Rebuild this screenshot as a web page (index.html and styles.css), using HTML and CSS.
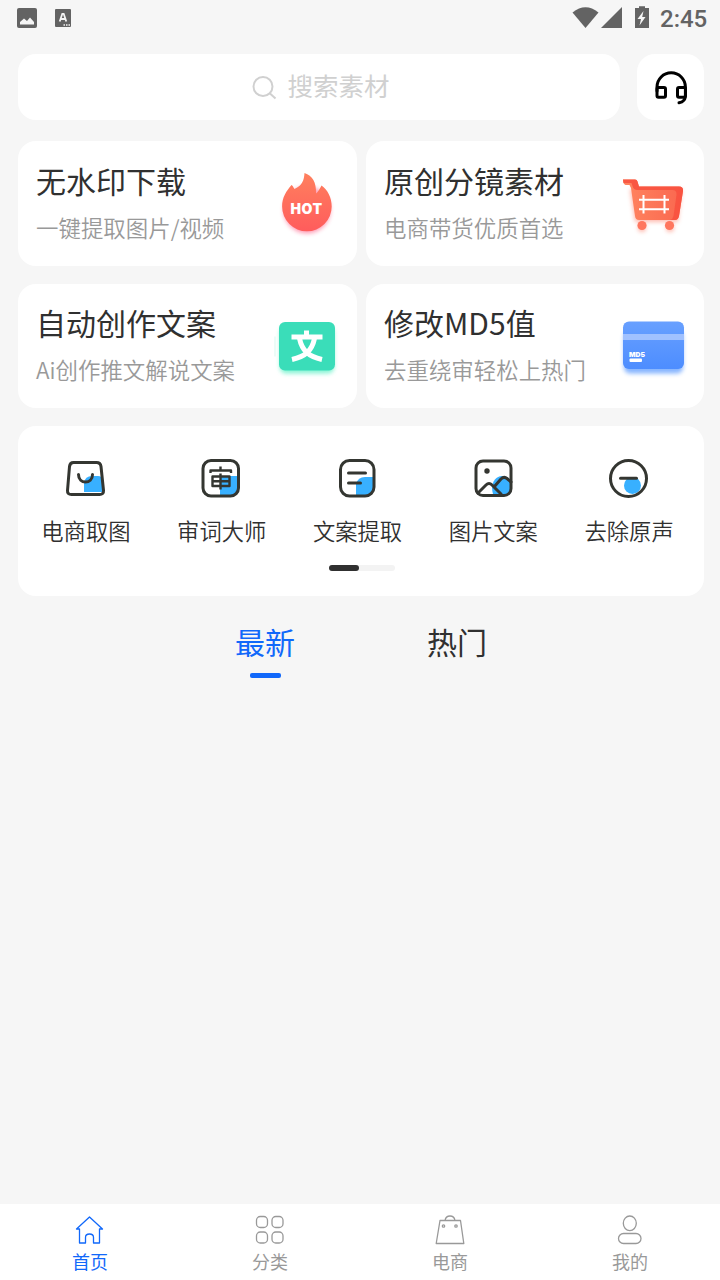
FILE: index.html
```html
<!DOCTYPE html>
<html lang="zh-CN">
<head>
<meta charset="utf-8">
<title>首页</title>
<link rel="stylesheet" href="styles.css">
</head>
<body>
<div class="app">
  <header class="status">
    <svg class="status-left" viewBox="0 0 90 36">
      <rect x="17" y="8" width="20" height="20" rx="2" fill="#636363"/>
      <path d="M20 24.5V22l4-3.500 3 2.500 3-3.500 4 4.500v2.500z" fill="#f5f5f5"/>
      <rect x="55" y="9" width="16" height="18" rx="1" fill="#636363"/>
      <path d="M59.700 21.500 62.300 13.800h1.400l2.600 7.700M60.800 19h4.400" fill="none" stroke="#f5f5f5" stroke-width="1.800"/>
      <path d="M63.500 25h6.500" stroke="#f5f5f5" stroke-width="1.500" stroke-dasharray="1.500 1"/>
    </svg>
    <div class="status-right">
      <svg class="signals" viewBox="572 0 80 36">
        <path d="M572.500 12.500Q585.500 2 598.500 12.500L585.500 28z" fill="#636363"/>
        <path d="M622 7v21h-21z" fill="#636363"/>
        <path d="M639 6.200h6V8h4v20h-14V8h4z" fill="#636363"/>
        <path d="M643.500 11 637.500 19h3.500l-1.500 6.500 6-8.500h-3.300z" fill="#f5f5f5"/>
      </svg>
      <span class="clock">2:45</span>
    </div>
  </header>

  <div class="search-row">
    <div class="search">
      <svg class="search-icon" viewBox="252 74 26 26" fill="none" stroke="#d0d0d0" stroke-width="2">
        <circle cx="264" cy="86.500" r="9.500"/><path d="m271 93.500 5.500 5"/>
      </svg>
      <span>搜索素材</span>
    </div>
    <button class="service" aria-label="客服">
      <svg viewBox="637 54 67 66" fill="none" stroke="#000" stroke-width="3">
        <path d="M657 91v-4a14.200 14.200 0 0 1 28.400 0v8c0 4-2 7.200-6.400 7.800" stroke-linecap="round"/>
        <rect x="657" y="87.500" width="8.500" height="9.800" rx="1.500"/>
        <rect x="677.500" y="87.500" width="8" height="9.800" rx="1.500"/>
      </svg>
    </button>
  </div>

  <main>
    <section class="cards">
      <article class="card">
        <div class="card-text"><h2>无水印下载</h2><p>一键提取图片/视频</p></div>
        <svg class="card-icon" viewBox="265 160 90 90">
          <defs>
            <linearGradient id="flame" x2="0" y2="1"><stop stop-color="#ff805e"/><stop offset="1" stop-color="#ff5c5c"/></linearGradient>
            <filter id="blur" x="-30%" y="-30%" width="160%" height="160%"><feGaussianBlur stdDeviation="2"/></filter>
          </defs>
          <circle cx="307" cy="210" r="23.500" fill="#ff668c" opacity=".65" filter="url(#blur)"/>
          <path d="M304.500 173c8 2.500 12 9.500 11.500 20.500 2.500-2 3.500-4.500 5.500-8 6 4 10.200 12 10.200 21a24.800 24.800 0 0 1-49.600 0c0-9 4.200-15.500 9.400-21.500 1.500 1 2 2.500 3 4 8-3.500 9.500-9 10-16z" fill="url(#flame)"/>
          <text x="306.500" y="214" class="hot">HOT</text>
        </svg>
      </article>
      <article class="card">
        <div class="card-text"><h2>原创分镜素材</h2><p>电商带货优质首选</p></div>
        <svg class="card-icon wide" viewBox="610 160 94 90">
          <defs>
            <linearGradient id="cart"><stop stop-color="#ff8560"/><stop offset="1" stop-color="#fa674f"/></linearGradient>
          </defs>
          <g fill="#ff765e" opacity=".5" filter="url(#blur)"><path d="M630 189h52l-4 33h-43z"/><circle cx="642" cy="228" r="4"/><circle cx="670" cy="228" r="4"/></g>
          <path d="M623 179.500h12q2 0 2.500 2l1.500 5h40q4.500 0 4 4.500l-4 25q-.8 4-4 4h-36q-3.500 0-4-4l-4-28-1.500-3h-4q-2.500-1-2.500-5.500z" fill="url(#cart)"/>
          <path d="M623 179.500h12q2 0 2.500 2l1.500 5h40q4.500 0 4 4.500l-4 25q-.8 4-4 4h-5q3-1 3.500-4l3-21q.5-5-4-5h-35q-4 0-5-4l-1-3h-8z" fill="#f8503e" opacity=".85"/>
          <circle cx="642" cy="225.500" r="4.600" fill="#ff765e"/><circle cx="669.500" cy="225.500" r="4.600" fill="#ff765e"/>
          <path d="M643.500 195v18.500M664.500 195v18.500M639 199.700h30M639 209.300h30" stroke="#fff" stroke-width="2"/>
        </svg>
      </article>
      <article class="card">
        <div class="card-text"><h2>自动创作文案</h2><p>Ai创作推文解说文案</p></div>
        <svg class="card-icon" viewBox="265 302.500 90 90">
          <rect x="280" y="326" width="54" height="47" rx="6" fill="#52f0c2" opacity=".7" filter="url(#blur)"/>
          <path d="M275 336v20" stroke="#e4fbf5" stroke-width="1.500"/>
          <rect x="279" y="321.500" width="56" height="48.500" rx="6" fill="#3addb9"/>
          <path d="M306.500 330v6M291.500 336.500h31M299.500 338c2.500 12 9 18 22.500 21M314.500 338c-2.500 12-9 18-22.500 21" fill="none" stroke="#fff" stroke-width="5"/>
        </svg>
      </article>
      <article class="card">
        <div class="card-text"><h2>修改MD5值</h2><p>去重绕审轻松上热门</p></div>
        <svg class="card-icon wide" viewBox="610 302.500 94 90">
          <defs><linearGradient id="bank" x2="0" y2="1"><stop stop-color="#68a0ff"/><stop offset="1" stop-color="#4d8dff"/></linearGradient></defs>
          <rect x="624" y="330" width="59" height="43" rx="6" fill="#5596ff" opacity=".7" filter="url(#blur)"/>
          <rect x="623" y="321" width="61" height="47.500" rx="6" fill="url(#bank)"/>
          <path d="M623 333.500h61v6h-61z" fill="#a0c1ff"/>
          <text x="629" y="356" class="md5">MD5</text>
          <rect x="629.500" y="358" width="12.500" height="3.600" rx="1" fill="#fff"/>
        </svg>
      </article>
    </section>

    <section class="tools">
      <div class="tool-list">
        <div class="tool">
          <svg viewBox="63 456 46 46">
            <path d="M84 492v-9q1-7 8-7h6q4 0 4.500 4l1 12z" fill="#38b0ff"/>
            <path d="M73.500 462.500h23q4 0 4.500 4l2.500 24q.3 4-4 4h-28q-4.300 0-4-4l2-24q.5-4 4-4z"/><path d="M78.500 474.500c0 10 14 10 14 0"/>
          </svg><span>电商取图</span>
        </div>
        <div class="tool">
          <svg viewBox="199 456 46 46">
            <path d="M220 476h17v14q0 5-5 5h-12z" fill="#38b0ff"/>
            <rect x="203" y="460.500" width="35.500" height="35.500" rx="8"/>
            <path class="glyph" d="M220.500 466.500v3M210.500 473v-2.500h20.500v2.500M212.500 476.500h17v9.500h-17zM212.500 481.200h17M220.500 473.500v16"/>
          </svg><span>审词大师</span>
        </div>
        <div class="tool">
          <svg viewBox="334 456 46 46">
            <path d="M356 495v-11q2-7 9-7h8v10q0 8-8 8z" fill="#38b0ff"/>
            <rect x="340.500" y="460.500" width="33.500" height="35.500" rx="9"/><path d="M348.500 473h17M348.500 483h12"/>
          </svg><span>文案提取</span>
        </div>
        <div class="tool">
          <svg viewBox="470 456 46 46">
            <path d="M493 494c-3-10 2-18 9-18 5 0 9 3 9 7v8q0 4-5 4z" fill="#38b0ff"/>
            <rect x="476" y="461" width="35" height="34.500" rx="7"/><circle cx="487" cy="471" r="2.700" class="dot"/>
            <path d="m478 493 8-8q3-3 6 0l9 9M494 487l7-8q3-3 6-.5l4 3.500"/>
          </svg><span>图片文案</span>
        </div>
        <div class="tool">
          <svg viewBox="606 456 46 46">
            <circle cx="632.500" cy="485.500" r="8.500" fill="#38b0ff"/>
            <circle cx="628.500" cy="478.500" r="18"/><path d="M620.500 478.200h16"/>
          </svg><span>去除原声</span>
        </div>
      </div>
      <div class="pager"><i></i></div>
    </section>

    <nav class="tabs"><span class="tab active">最新</span><span class="tab">热门</span></nav>
  </main>

  <footer class="nav">
    <div class="nav-item current">
      <svg viewBox="74 1214 32 32"><path d="m76.500 1229 13-12 13 12h-3v14h-6v-5.500q0-3.500-4-3.500t-4 3.500v5.500h-6v-14z"/></svg><span>首页</span>
    </div>
    <div class="nav-item">
      <svg viewBox="254 1214 32 32"><rect x="256.500" y="1216.500" width="11" height="11" rx="3.800"/><rect x="272" y="1216.500" width="11" height="11" rx="3.800"/><rect x="256.500" y="1232" width="11" height="11" rx="3.800"/><rect x="272" y="1232" width="11" height="11" rx="3.800"/></svg><span>分类</span>
    </div>
    <div class="nav-item">
      <svg viewBox="434 1214 32 32"><path d="M440 1220.500h20.500l3.300 23h-27.600zM445 1220.500c1-6 9-6 10 0"/><circle cx="443.500" cy="1226" r="1.200"/><circle cx="456" cy="1226" r="1.200"/></svg><span>电商</span>
    </div>
    <div class="nav-item">
      <svg viewBox="614 1214 32 32"><ellipse cx="629.800" cy="1223.300" rx="6.500" ry="7.300"/><rect x="618.500" y="1233.500" width="22.500" height="10" rx="5"/></svg><span>我的</span>
    </div>
  </footer>
</div>
</body>
</html>
```

FILE: styles.css
```css
* { box-sizing: border-box; }
body {
  margin: 0;
  background: #f6f6f6;
  color: #303030;
  font-family: "Noto Sans CJK SC", sans-serif;
}
svg { display: block; flex: none; }
h2, p { margin: 0; font-weight: 400; white-space: nowrap; }
.app { width: 720px; height: 1280px; display: flex; flex-direction: column; }

.status { height: 36px; display: flex; justify-content: space-between; }
.status-left { width: 90px; height: 36px; }
.status-right { display: flex; width: 148px; }
.signals { width: 80px; height: 36px; }
.clock { padding-left: 8px; font: 500 24px/38px Roboto, sans-serif; color: #636363; }

.search-row { display: flex; gap: 17px; padding: 18px 16px 0 18px; }
.search {
  flex: 1;
  height: 66px;
  padding-left: 3px;
  display: flex;
  justify-content: center;
  align-items: center;
  gap: 10px;
  border-radius: 18px;
  background: #fff;
  color: #d0d0d0;
  font-size: 25.500px;
}
.search span { line-height: 30px; margin-bottom: 5px; }
.search-icon { width: 26px; height: 26px; }
.service { width: 67px; height: 66px; padding: 0; border: 0; border-radius: 18px; background: #fff; }
.service svg { width: 67px; height: 66px; }

main { flex: 1; padding: 21px 16px 0 18px; }
.cards { display: grid; grid-template-columns: 339px 338px; gap: 18px 9px; }
.card {
  height: 124.500px;
  display: flex;
  justify-content: space-between;
  border-radius: 18px;
  background: #fff;
}
.card-text { width: 220px; padding: 18.500px 0 0 18px; }
.card-text h2 { font-size: 30px; line-height: 40px; }
.card-text p { margin-top: 11px; font-size: 22.450px; line-height: 32px; color: #999; font-weight: 350; }
.card-icon { width: 90px; height: 90px; margin: 19px 2px 0 0; }
.card-icon.wide { width: 94px; margin-right: 0; }
.hot { font: 900 14px Inter, sans-serif; fill: #fff; text-anchor: middle; letter-spacing: .5px; }
.md5 { font: 900 6.800px Inter, sans-serif; fill: #fff; }

.tools { height: 170px; margin-top: 18px; padding-top: 30px; border-radius: 18px; background: #fff; }
.tool-list { display: flex; }
.tool {
  width: 135.800px;
  display: flex;
  flex-direction: column;
  align-items: center;
  font-size: 22.300px;
  line-height: 32px;
  font-weight: 350;
}
.tool svg { width: 46px; height: 46px; margin-bottom: 12px; }
.tool path, .tool rect, .tool circle { stroke: #343631; fill: none; stroke-width: 3; stroke-linecap: round; stroke-linejoin: round; }
.tool path[fill], .tool circle[fill] { fill: #38b0ff; stroke: none; }
.tool .glyph { stroke-width: 2.400; stroke-linecap: butt; }
.tool .dot { fill: #343631; stroke: none; }
.pager { width: 66px; height: 6px; margin: 19px auto 0 310.500px; border-radius: 3px; background: #f3f3f3; }
.pager i { display: block; width: 30px; height: 6px; border-radius: 3px; background: #303030; }

.tabs { display: flex; padding: 25px 0 0 151px; }
.tab { width: 192px; text-align: center; font-size: 30px; line-height: 40px; }
.tab.active { color: #1168fa; }
.tab.active::after { content: ""; display: block; width: 31px; height: 5px; margin: 12px auto 0; border-radius: 2px; background: #1168fa; }

.nav { height: 76px; display: flex; background: #fff; }
.nav-item {
  flex: 1;
  padding-top: 10px;
  display: flex;
  flex-direction: column;
  align-items: center;
  color: #999;
  font-size: 18px;
  line-height: 28px;
}
.nav-item svg { width: 32px; height: 32px; margin-bottom: 1px; fill: none; stroke: currentColor; stroke-width: 1.300; stroke-linejoin: round; }
.nav-item.current { color: #1168fa; }
```
